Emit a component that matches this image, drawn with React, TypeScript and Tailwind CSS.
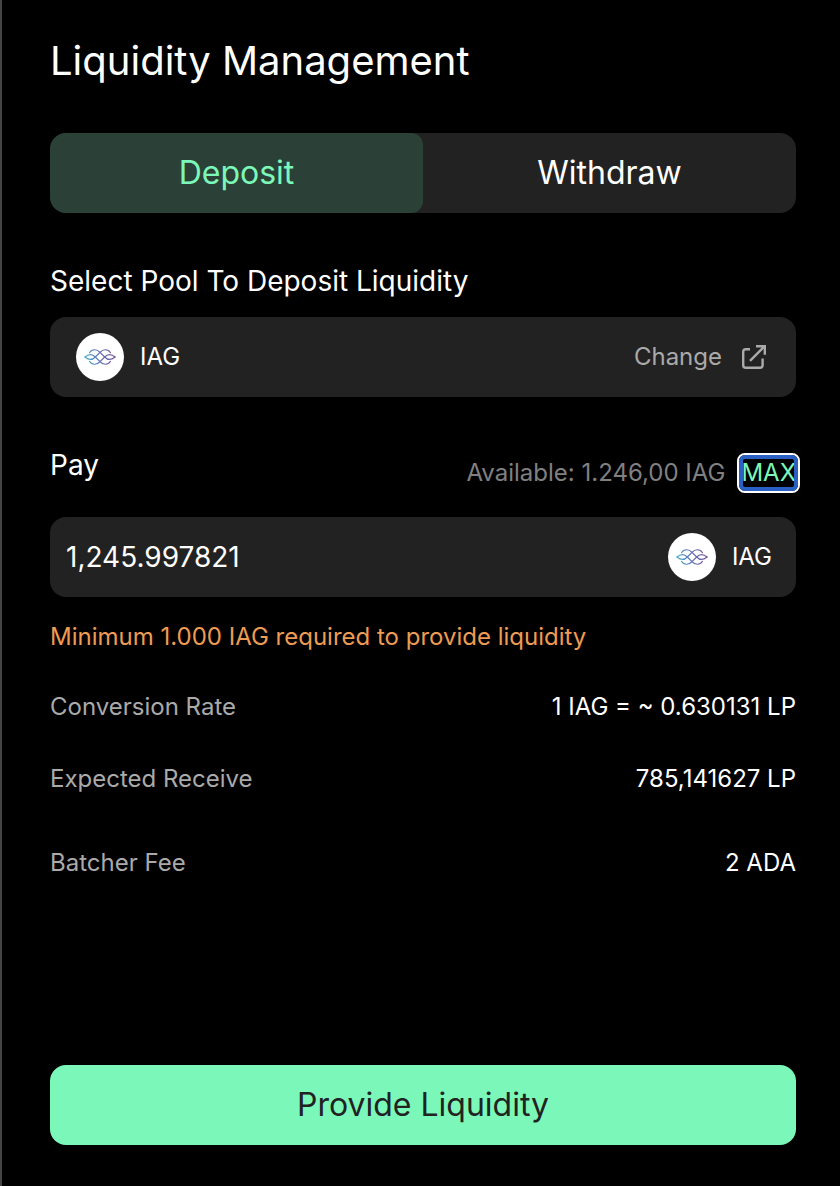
import { useId, useState } from 'react'
import { clsx } from 'clsx'

type Tab = 'deposit' | 'withdraw'

interface TokenBadgeProps {
  name: string
}

interface DetailRowProps {
  label: string
  value: string
  className?: string
}

function TokenBadge({ name }: TokenBadgeProps) {
  const gradientId = useId()

  return (
    <div className="flex items-center gap-4">
      <span className="flex size-12 shrink-0 items-center justify-center rounded-full bg-white">
        <svg width="32" height="18" viewBox="0 0 32 18" fill="none" stroke={`url(#${gradientId})`} strokeWidth="1.2" strokeLinecap="round" aria-hidden="true">
          <defs>
            <linearGradient id={gradientId} x1="0" y1="12" x2="32" y2="6" gradientUnits="userSpaceOnUse">
              <stop offset="0" stopColor="#45b5d0" />
              <stop offset="0.5" stopColor="#5c6db8" />
              <stop offset="1" stopColor="#7c5596" />
            </linearGradient>
          </defs>
          {/* four mirrored strands, each running from an outer arc into the opposite leaf */}
          <path d="M5.5 4.7C8 .8 13 .8 16 4.4L20.7 9C23.5 12 27.5 12 31 9" />
          <path d="M26.5 4.7C24 .8 19 .8 16 4.4L11.3 9C8.5 12 4.5 12 1 9" />
          <path d="M5.5 13.3C8 17.2 13 17.2 16 13.6L20.7 9C23.5 6 27.5 6 31 9" />
          <path d="M26.5 13.3C24 17.2 19 17.2 16 13.6L11.3 9C8.5 6 4.5 6 1 9" />
        </svg>
      </span>
      <span className="text-2xl text-white">{name}</span>
    </div>
  )
}

function DetailRow({ label, value, className }: DetailRowProps) {
  return (
    <div className={clsx('flex items-center justify-between gap-4 text-2xl', className)}>
      <dt className="text-[#aaaaaa]">{label}</dt>
      <dd className="text-white">{value}</dd>
    </div>
  )
}

export default function App() {
  const [tab, setTab] = useState<Tab>('deposit')
  const [amount, setAmount] = useState('1,245.997821')

  const tabClass = (active: boolean) =>
    clsx('h-20 flex-1 text-[32px]', active ? 'rounded-xl bg-[#2b4137] text-[#7bf8b9]' : 'text-white')

  return (
    <main className="flex min-h-screen flex-col border-l-2 border-[#444444] bg-black pt-[37px] pr-11 pb-[41px] pl-12 font-['Inter','Liberation_Sans',sans-serif]">
      <h1 className="text-[40px] leading-12 text-white">Liquidity Management</h1>

      <div className="mt-12 flex overflow-hidden rounded-2xl bg-[#222222]">
        <button type="button" aria-pressed={tab === 'deposit'} className={tabClass(tab === 'deposit')} onClick={() => setTab('deposit')}>
          Deposit
        </button>
        <button type="button" aria-pressed={tab === 'withdraw'} className={tabClass(tab === 'withdraw')} onClick={() => setTab('withdraw')}>
          Withdraw
        </button>
      </div>

      <h2 className="mt-12 text-[28px] leading-10 text-white">Select Pool To Deposit Liquidity</h2>
      <div className="mt-4 flex h-20 items-center justify-between rounded-2xl bg-[#222222] pr-[30px] pl-[26px]">
        <TokenBadge name="IAG" />
        <button type="button" className="flex items-center gap-5 text-2xl text-[#aaaaaa]">
          Change
          <svg width="24" height="24" viewBox="0 0 24 24" fill="none" stroke="currentColor" strokeWidth="2.4" aria-hidden="true">
            <path d="M8 4.2H3.8Q1.2 4.2 1.2 6.8V20.2Q1.2 22.8 3.8 22.8H18Q20.6 22.8 20.6 20.2V13.5" />
            <path d="M8 15.8L22.4 1.4M14 1.2H22.8V9.8" />
          </svg>
        </button>
      </div>

      <div className="mt-12 flex items-start justify-between">
        <label htmlFor="pay-amount" className="text-[28px] leading-10 text-white">
          Pay
        </label>
        <div className="-mr-1 mt-2 flex items-center gap-3 text-2xl text-[#808080]">
          <span>Available: 1.246,00 IAG</span>
          {/* focus ring: white outside, blue inside */}
          <button
            type="button"
            className="flex h-10 items-center rounded-lg border-2 border-white px-[2px] text-[#7bf8b9] outline-4 -outline-offset-6 outline-[#2a5fc4]"
            onClick={() => setAmount('1,245.997821')}
          >
            MAX
          </button>
        </div>
      </div>
      <div className="mt-6 flex h-20 items-center justify-between gap-4 rounded-2xl bg-[#222222] pr-6 pl-4">
        <input
          id="pay-amount"
          type="text"
          inputMode="decimal"
          value={amount}
          onChange={(e) => setAmount(e.target.value)}
          className="min-w-0 flex-1 bg-transparent text-[28px] text-white outline-none"
        />
        <TokenBadge name="IAG" />
      </div>
      <p className="mt-6 text-2xl text-[#ee9b53]">Minimum 1.000 IAG required to provide liquidity</p>

      <dl className="mt-[38px]">
        <DetailRow label="Conversion Rate" value="1 IAG = ~ 0.630131 LP" />
        <DetailRow label="Expected Receive" value="785,141627 LP" className="mt-10" />
        <DetailRow label="Batcher Fee" value="2 ADA" className="mt-13" />
      </dl>

      <button type="button" className="mt-auto h-20 w-full shrink-0 rounded-2xl bg-[#7bf8b9] text-[32px] text-[#222222]">
        Provide Liquidity
      </button>
    </main>
  )
}
